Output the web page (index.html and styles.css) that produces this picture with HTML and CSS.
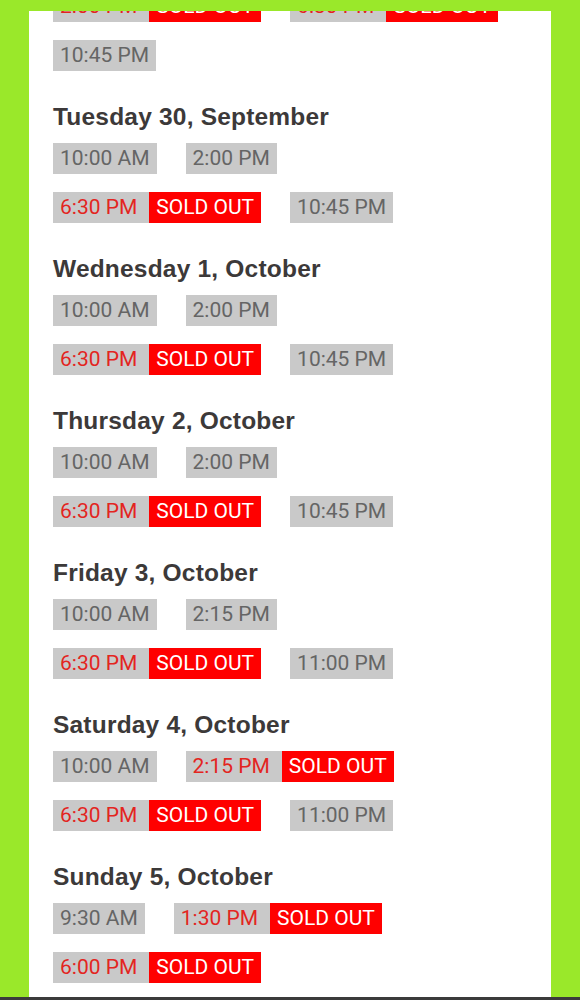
FILE: index.html
```html
<!DOCTYPE html>
<html lang="en">
<head>
<meta charset="utf-8">
<title>Showtimes</title>
<link rel="stylesheet" href="styles.css">
</head>
<body>
<main class="panel">
  <div class="schedule">
    <section class="day">
      <h2 class="day-title">Monday 29, September</h2>
      <div class="slots">
        <div class="slot-row">
          <span class="slot sold"><span class="time">2:00 PM</span><span class="tag">SOLD OUT</span></span>
          <span class="slot sold"><span class="time">6:30 PM</span><span class="tag">SOLD OUT</span></span>
        </div>
        <div class="slot-row">
          <span class="slot"><span class="time">10:45 PM</span></span>
        </div>
      </div>
    </section>

    <section class="day">
      <h2 class="day-title">Tuesday 30, September</h2>
      <div class="slots">
        <div class="slot-row">
          <span class="slot"><span class="time">10:00 AM</span></span>
          <span class="slot"><span class="time">2:00 PM</span></span>
        </div>
        <div class="slot-row">
          <span class="slot sold"><span class="time">6:30 PM</span><span class="tag">SOLD OUT</span></span>
          <span class="slot"><span class="time">10:45 PM</span></span>
        </div>
      </div>
    </section>

    <section class="day">
      <h2 class="day-title">Wednesday 1, October</h2>
      <div class="slots">
        <div class="slot-row">
          <span class="slot"><span class="time">10:00 AM</span></span>
          <span class="slot"><span class="time">2:00 PM</span></span>
        </div>
        <div class="slot-row">
          <span class="slot sold"><span class="time">6:30 PM</span><span class="tag">SOLD OUT</span></span>
          <span class="slot"><span class="time">10:45 PM</span></span>
        </div>
      </div>
    </section>

    <section class="day">
      <h2 class="day-title">Thursday 2, October</h2>
      <div class="slots">
        <div class="slot-row">
          <span class="slot"><span class="time">10:00 AM</span></span>
          <span class="slot"><span class="time">2:00 PM</span></span>
        </div>
        <div class="slot-row">
          <span class="slot sold"><span class="time">6:30 PM</span><span class="tag">SOLD OUT</span></span>
          <span class="slot"><span class="time">10:45 PM</span></span>
        </div>
      </div>
    </section>

    <section class="day">
      <h2 class="day-title">Friday 3, October</h2>
      <div class="slots">
        <div class="slot-row">
          <span class="slot"><span class="time">10:00 AM</span></span>
          <span class="slot"><span class="time">2:15 PM</span></span>
        </div>
        <div class="slot-row">
          <span class="slot sold"><span class="time">6:30 PM</span><span class="tag">SOLD OUT</span></span>
          <span class="slot"><span class="time">11:00 PM</span></span>
        </div>
      </div>
    </section>

    <section class="day">
      <h2 class="day-title">Saturday 4, October</h2>
      <div class="slots">
        <div class="slot-row">
          <span class="slot"><span class="time">10:00 AM</span></span>
          <span class="slot sold"><span class="time">2:15 PM</span><span class="tag">SOLD OUT</span></span>
        </div>
        <div class="slot-row">
          <span class="slot sold"><span class="time">6:30 PM</span><span class="tag">SOLD OUT</span></span>
          <span class="slot"><span class="time">11:00 PM</span></span>
        </div>
      </div>
    </section>

    <section class="day">
      <h2 class="day-title">Sunday 5, October</h2>
      <div class="slots">
        <div class="slot-row">
          <span class="slot"><span class="time">9:30 AM</span></span>
          <span class="slot sold"><span class="time">1:30 PM</span><span class="tag">SOLD OUT</span></span>
        </div>
        <div class="slot-row">
          <span class="slot sold"><span class="time">6:00 PM</span><span class="tag">SOLD OUT</span></span>
        </div>
      </div>
    </section>
  </div>
</main>
<div class="bottom-bar"></div>
</body>
</html>
```

FILE: styles.css
```css
html, body {
  margin: 0;
  padding: 0;
}

body {
  background: #9ae82a;
  height: 1000px;
  display: flex;
  flex-direction: column;
  overflow: hidden;
}

.panel {
  margin: 11px 29px 0;
  height: 986px;
  background: #ffffff;
  overflow: hidden;
  padding: 0 24px;
  box-sizing: border-box;
  flex: none;
}

.schedule {
  margin-top: -92px;
}

.day-title {
  margin: 31px 0 11px;
  font-family: "Liberation Sans", Arial, sans-serif;
  font-weight: bold;
  font-size: 24.5px;
  line-height: 30px;
  letter-spacing: 0.2px;
  color: #3c3939;
}

.slots {
  display: flex;
  flex-direction: column;
  gap: 18px;
}

.slot-row {
  display: flex;
  gap: 29px;
}

.slot {
  display: flex;
  height: 31px;
  line-height: 31px;
  font-family: Roboto, "Liberation Sans", sans-serif;
  font-size: 21px;
  white-space: nowrap;
}

.time {
  background: #c9c9c9;
  color: #656565;
  padding: 0 7px;
}

.slot.sold .time {
  color: #e3251f;
  padding-right: 12px;
}

.tag {
  background: #ff0000;
  color: #ffffff;
  padding: 0 7px;
}

.bottom-bar {
  flex: none;
  height: 3px;
  background: #3b3b3b;
}
```
